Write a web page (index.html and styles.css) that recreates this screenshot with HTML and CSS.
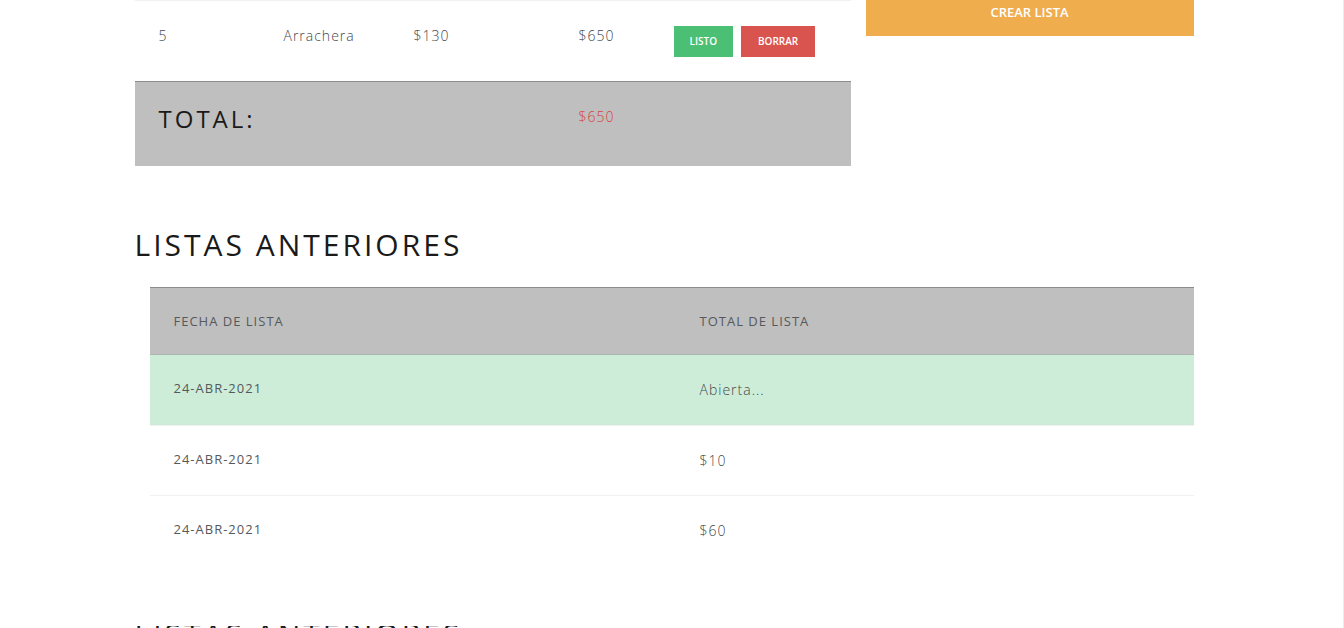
FILE: index.html
```html
<!DOCTYPE html>
<html lang="es">
<head>
<meta charset="utf-8">
<meta name="viewport" content="width=device-width, initial-scale=1">
<title>Listas</title>
<link rel="stylesheet" href="styles.css">
</head>
<body>
<main class="container">
  <div class="row">
    <table class="table current">
      <colgroup><col class="c-qty"><col class="c-name"><col class="c-price"><col class="c-total"><col></colgroup>
      <tbody>
        <tr>
          <td>5</td><td>Arrachera</td><td>$130</td><td>$650</td>
          <td class="actions-cell"><div class="actions"><button class="btn btn-sm success" type="button">Listo</button><button class="btn btn-sm danger" type="button">Borrar</button></div></td>
        </tr>
        <tr class="total">
          <td colspan="3"><h4>Total:</h4></td><td class="amount">$650</td><td></td>
        </tr>
      </tbody>
    </table>
    <aside class="side"><button class="btn btn-block warning" type="button">Crear lista</button></aside>
  </div>
  <section class="previous">
    <h3>Listas anteriores</h3>
    <div class="indent">
      <table class="table history">
        <colgroup><col class="c-date"><col></colgroup>
        <thead><tr><th scope="col">Fecha de lista</th><th scope="col">Total de lista</th></tr></thead>
        <tbody>
          <tr class="open"><th scope="row">24-abr-2021</th><td>Abierta...</td></tr>
          <tr><th scope="row">24-abr-2021</th><td>$10</td></tr>
          <tr><th scope="row">24-abr-2021</th><td>$60</td></tr>
        </tbody>
      </table>
    </div>
  </section>
  <section class="next"><h3>Listas anteriores</h3></section>
</main>
</body>
</html>
```
FILE: styles.css
```css
* { box-sizing: border-box; }
html, body { height: 100%; }
body {
  margin: 0;
  overflow: hidden;
  border-right: 1px solid #ececec;
  background: #fff;
  color: #44484b;
  font: 300 14px/21px "Open Sans", "Noto Sans", sans-serif;
}
.container {
  max-width: 1090px;
  margin: 0 auto;
  padding: 0 23px 0 8px;
}
h3, h4 {
  margin: 0;
  color: #1a1a1a;
  font-weight: 400;
  text-transform: uppercase;
  letter-spacing: 3px;
}
h3 { font-size: 30px; line-height: 34px; }
h4 { font-size: 24px; line-height: 26px; }
.row { display: flex; gap: 15px; align-items: flex-start; }
.table {
  width: 100%;
  border-collapse: collapse;
  table-layout: fixed;
  letter-spacing: 1px;
}
.table th, .table td {
  padding: 24px;
  border-top: 1px solid #f0f1f2;
  text-align: left;
  vertical-align: top;
}
.table th { color: #55595c; font-size: 13px; line-height: 18px; font-weight: 500; text-transform: uppercase; }
.current { flex: 716; width: 0; }
.side { flex: 328; }
.c-qty { width: 125px; }
.c-name { width: 130px; }
.c-price { width: 165px; }
.c-total { width: 96px; }
.c-date { width: 526px; }
.actions { display: flex; gap: 8px; }
.table .actions-cell { padding: 25px 16px 24px 23px; }
.table .total td { height: 84px; border-top-color: #8c8c8c; background: #bfbfbf; }
.table .total .amount { color: #d9423e; }
.btn {
  border: 0;
  border-radius: 0;
  color: #fff;
  font-family: inherit;
  font-weight: 600;
  text-transform: uppercase;
}
.btn-sm { padding: 8px 16px; font-size: 10px; line-height: 15px; }
.btn-sm.danger { padding: 8px 17px; }
.btn-block { width: 100%; padding: 3px 24px 15px; font-size: 13px; line-height: 18px; }
.success { background: #4bbf73; }
.danger { background: #d9534f; }
.warning { background: #f0ad4e; }
.previous { padding-top: 62px; }
.indent { padding: 25px 0 0 15px; }
.history thead th { border-top-color: #8c8c8c; border-bottom: 1px solid #adb5b0; background: #bfbfbf; }
.history .open > th, .history .open > td { padding-bottom: 25px; background: #cdedd8; }
.next { margin-top: 61px; overflow: hidden; }
.next h3 { margin-top: -9px; }
```
